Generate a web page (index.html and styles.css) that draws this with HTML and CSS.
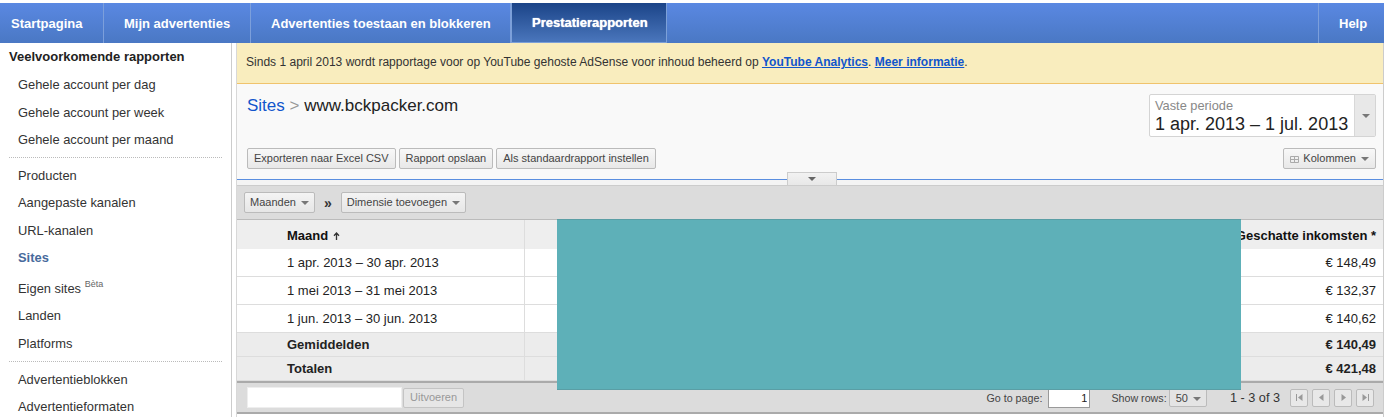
FILE: index.html
```html
<!DOCTYPE html>
<html lang="nl">
<head>
<meta charset="utf-8">
<title>Prestatierapporten</title>
<link rel="stylesheet" href="styles.css">
</head>
<body>
<nav class="nav">
  <a class="tab t1">Startpagina</a>
  <a class="tab t2">Mijn advertenties</a>
  <a class="tab t3">Advertenties toestaan en blokkeren</a>
  <a class="tab t4 active">Prestatierapporten</a>
  <span class="nav-fill"></span>
  <a class="tab help">Help</a>
</nav>
<div class="page">
  <aside class="side">
    <h2 class="side-title">Veelvoorkomende rapporten</h2>
    <ul class="menu">
      <li>Gehele account per dag</li>
      <li>Gehele account per week</li>
      <li>Gehele account per maand</li>
    </ul>
    <ul class="menu sep">
      <li>Producten</li>
      <li>Aangepaste kanalen</li>
      <li>URL-kanalen</li>
      <li class="current">Sites</li>
      <li class="beta-row">Eigen sites <sup>Bèta</sup></li>
      <li>Landen</li>
      <li>Platforms</li>
    </ul>
    <ul class="menu sep last">
      <li>Advertentieblokken</li>
      <li>Advertentieformaten</li>
    </ul>
  </aside>
  <main class="main">
    <div class="notice">Sinds 1 april 2013 wordt rapportage voor op YouTube gehoste AdSense voor inhoud beheerd op <a>YouTube Analytics</a>. <a>Meer informatie</a>.</div>
    <section class="head">
      <div class="head-top">
        <div class="crumb"><a>Sites</a> <span class="gt">&gt;</span> www.bckpacker.com</div>
        <div class="period">
          <div class="period-text"><span class="period-label">Vaste periode</span><span class="period-value">1 apr. 2013 – 1 jul. 2013</span></div>
          <div class="period-arrow"><i class="caret"></i></div>
        </div>
      </div>
      <div class="actions">
        <button class="btn">Exporteren naar Excel CSV</button>
        <button class="btn">Rapport opslaan</button>
        <button class="btn">Als standaardrapport instellen</button>
        <button class="btn cols"><svg class="grid-ico" width="9" height="7" viewBox="0 0 9 7"><path d="M.5.5h8v6h-8zM.5 3.500h8M4.500 .5v6" fill="none" stroke="#aaa"/></svg>Kolommen <i class="caret"></i></button>
      </div>
    </section>
    <div class="strip"><div class="handle"><i class="caret small"></i></div></div>
    <div class="filters">
      <button class="btn">Maanden <i class="caret"></i></button>
      <span class="chev">»</span>
      <button class="btn">Dimensie toevoegen <i class="caret"></i></button>
    </div>
    <div class="table-wrap">
      <table class="report">
        <thead>
          <tr><th class="c1">Maand <svg class="sort" width="7" height="8" viewBox="0 0 7 8"><path d="M3.500 8V2M1 3.800 3.500 1 6 3.800" fill="none" stroke="#333" stroke-width="1.300"/></svg></th><th class="c2"></th><th class="c3">Geschatte inkomsten *</th></tr>
        </thead>
        <tbody>
          <tr><td class="c1">1 apr. 2013 – 30 apr. 2013</td><td class="c2"></td><td class="c3">€ 148,49</td></tr>
          <tr><td class="c1">1 mei 2013 – 31 mei 2013</td><td class="c2"></td><td class="c3">€ 132,37</td></tr>
          <tr><td class="c1">1 jun. 2013 – 30 jun. 2013</td><td class="c2"></td><td class="c3">€ 140,62</td></tr>
        </tbody>
        <tfoot>
          <tr><td class="c1">Gemiddelden</td><td class="c2"></td><td class="c3">€ 140,49</td></tr>
          <tr><td class="c1">Totalen</td><td class="c2"></td><td class="c3">€ 421,48</td></tr>
        </tfoot>
      </table>
      <div class="redact"></div>
    </div>
    <div class="pager">
      <input class="search" type="text" aria-label="Zoeken">
      <button class="btn ghost">Uitvoeren</button>
      <span class="grow"></span>
      <label class="pg-label">Go to page:</label>
      <input class="pg-input" type="text" value="1" aria-label="Go to page">
      <label class="pg-label rows">Show rows:</label>
      <button class="btn rows-btn">50 <i class="caret"></i></button>
      <span class="count">1 - 3 of 3</span>
      <span class="pg-btns">
        <button class="pg"><svg width="9" height="9" viewBox="0 0 9 9"><path d="M1.500 1v7" stroke="#999" fill="none"/><path d="M7.500 1v7L3 4.500z" fill="#999"/></svg></button>
        <button class="pg"><svg width="9" height="9" viewBox="0 0 9 9"><path d="M6.500 1v7L2 4.500z" fill="#999"/></svg></button>
        <button class="pg"><svg width="9" height="9" viewBox="0 0 9 9"><path d="M2.500 1v7L7 4.500z" fill="#999"/></svg></button>
        <button class="pg"><svg width="9" height="9" viewBox="0 0 9 9"><path d="M1.500 1v7L6 4.500z" fill="#999"/><path d="M7.500 1v7" stroke="#999" fill="none"/></svg></button>
      </span>
    </div>
    <div class="bottom-rule"></div>
  </main>
</div>
</body>
</html>
```
FILE: styles.css
```css
* { box-sizing: border-box; }
html, body { margin: 0; padding: 0; height: 417px; overflow: hidden; background: #fff; }
body { padding-top: 3px; font-family: "Liberation Sans", Arial, sans-serif; font-size: 13px; color: #222; }
a { cursor: pointer; }

.nav { display: flex; height: 40px; background: linear-gradient(#5a88e2, #4a78c4); color: #fff; }
.tab { display: flex; align-items: center; font-weight: bold; font-size: 13px; color: #fff; border-right: 1px solid #7c9fdb; white-space: nowrap; }
.t1 { width: 104px; padding-left: 11px; }
.t2 { width: 147px; padding-left: 20px; }
.t3 { width: 260px; padding-left: 20px; }
.t4 { width: 156px; padding-left: 20px; background: linear-gradient(#1b4488, #4a76bc); border: 1px solid #7ca0d8; border-top: 0; text-shadow: 0 0 1px #fff; }
.nav-fill { flex: 1; }
.help { width: 66px; padding-left: 20px; border-right: 0; border-left: 1px solid #7c9fdb; }

.page { display: flex; height: 374px; }
.side { position: relative; width: 236px; flex: none; }
.side::after { content: ""; position: absolute; left: 231px; top: 0; bottom: 0; width: 1px; background: #ccc; }
.side-title { margin: 0; width: 231px; font-size: 13px; font-weight: bold; color: #222; height: 28px; line-height: 28px; padding-left: 9px; }
.menu { list-style: none; margin: 0; width: 231px; padding: 0; }
.menu li { height: 27.500px; line-height: 27px; padding-left: 18px; font-size: 12.900px; color: #333; }
.menu.sep { margin: 3px 9px 0 9px; width: 213px; border-top: 1px dotted #bbb; padding-top: 4px; }
.menu.sep.last { margin-top: 3.500px; }
.menu.sep li { padding-left: 9px; }
.menu.last li { line-height: 28px; }
.menu li.current { font-weight: bold; color: #476a9c; }
.menu li.beta-row { height: 30.500px; line-height: 34px; }
.menu sup { font-size: 9px; color: #666; line-height: 0; vertical-align: 6px; }

.main { flex: 1; min-width: 0; display: flex; flex-direction: column; border-left: 1px solid #d8d8d8; border-right: 1px solid #ccc; }
.notice { height: 41px; background: #f9edbe; border-bottom: 1px solid #f0c36d; padding: 12px 0 0 9px; font-size: 12.040px; color: #333; white-space: nowrap; }
.notice a { color: #1155cc; font-weight: bold; text-decoration: underline; }

.head { height: 96px; background: #f9f9f9; border-bottom: 1px solid #5a8ee0; padding: 0 7px 0 10px; }
.head-top { display: flex; justify-content: space-between; height: 64px; padding-top: 10px; }
.crumb { font-size: 17px; color: #222; line-height: 20px; padding-top: 2px; }
.crumb a { color: #1155cc; }
.gt { color: #999; }
.period { display: flex; width: 227px; height: 43px; border: 1px solid #d4d4d4; border-radius: 2px; background: #fff; }
.period-text { flex: 1; padding: 3px 0 0 5px; display: flex; flex-direction: column; white-space: nowrap; }
.period-label { font-size: 12.800px; color: #888; line-height: 15px; }
.period-value { font-size: 18px; color: #222; line-height: 22px; }
.period-arrow { width: 21px; background: #e8e8e8; border-left: 1px solid #d8d8d8; display: flex; align-items: center; justify-content: center; }
.actions { display: flex; gap: 3px; }
.btn { font: 11px "Liberation Sans", Arial, sans-serif; color: #444; height: 21px; padding: 0 6px 2px; border: 1px solid #bbb; border-radius: 2px; background: linear-gradient(#f8f8f8, #e8e8e8); white-space: nowrap; }
.cols { margin-left: auto; padding: 0 6px 2px; }
.grid-ico { margin-right: 4px; vertical-align: -1px; }
.caret { display: inline-block; width: 0; height: 0; margin-left: 2px; vertical-align: 1px; border: 4px solid transparent; border-top-color: #777; border-bottom: 0; }
.caret.small { border-width: 4px; border-bottom: 0; border-top-color: #666; margin: 0; }
.strip { position: relative; height: 6px; background: #f4f4f4; border-bottom: 1px solid #ccc; }
.handle { position: absolute; left: 550px; top: -8px; width: 50px; height: 13px; background: linear-gradient(#f2f2f2, #e8e8e8); border: 1px solid #ccc; border-bottom: 0; display: flex; align-items: center; justify-content: center; }

.filters { height: 34px; background: #dcdcdc; border-bottom: 1px solid #bbb; display: flex; align-items: center; padding: 0 0 0 7px; }
.filters .btn { height: 21px; padding: 0 5px 2px; background: linear-gradient(#f4f4f4, #e6e6e6); }
.chev { font-weight: bold; font-size: 14px; color: #333; margin: 0 9px; }

.table-wrap { position: relative; }
.report { width: 100%; border-collapse: separate; border-spacing: 0; table-layout: fixed; font-size: 13px; }
.report td, .report th { padding: 0; }
.report .c1 { width: 287px; padding-left: 50px; text-align: left; }
.report .c2 { border-left: 1px solid #ddd; }
.report .c3 { width: 260px; text-align: right; padding-right: 7px; white-space: nowrap; }
.report thead tr { height: 29px; background: #eee; }
.report thead th { color: #111; font-weight: bold; font-size: 13px; padding-top: 2px; }
.sort { margin-left: 1px; }
.report tbody tr { height: 28px; }
.report tbody td { border-bottom: 1px solid #ddd; }
.report tfoot tr { height: 24px; background: #ececec; font-weight: bold; }
.report tfoot td { border-bottom: 1px solid #ddd; }
.redact { position: absolute; left: 320px; top: -1px; width: 684px; height: 171px; background: #5eb0b8; border: 1px solid #5a9ea5; border-width: 1px 0 1px 0; }

.pager { height: 31px; background: #dcdcdc; border-top: 2px solid #aaa; display: flex; align-items: center; padding: 0 9px 0 10px; font-size: 10.700px; color: #444; }
.search { width: 155px; height: 21px; border: 1px solid #eee; background: #fff; padding: 0; }
.btn.ghost { height: 20px; margin-left: 1px; padding: 0 6px 1px; color: #999; background: #e6e6e6; border-color: #c4c4c4; }
.grow { flex: 1; }
.pg-input { width: 42px; height: 21px; margin-left: 6px; border: 1px solid #999; border-top-color: #777; background: #fff; text-align: right; font: 11px "Liberation Sans", Arial, sans-serif; color: #222; padding: 0 2px; }
.rows { margin-left: 21px; }
.rows-btn { height: 19px; margin-left: 2px; padding: 0 5px 0 6px; background: #e4e4e4; }
.count { margin: 0 10px 0 23px; font-size: 12.700px; color: #333; }
.pg-btns { display: flex; gap: 4px; }
.pg { width: 18px; height: 18px; padding: 0; border: 1px solid #bbb; border-radius: 2px; background: #e8e8e8; display: flex; align-items: center; justify-content: center; }
.bottom-rule { height: 2px; background: #aaa; }
```
